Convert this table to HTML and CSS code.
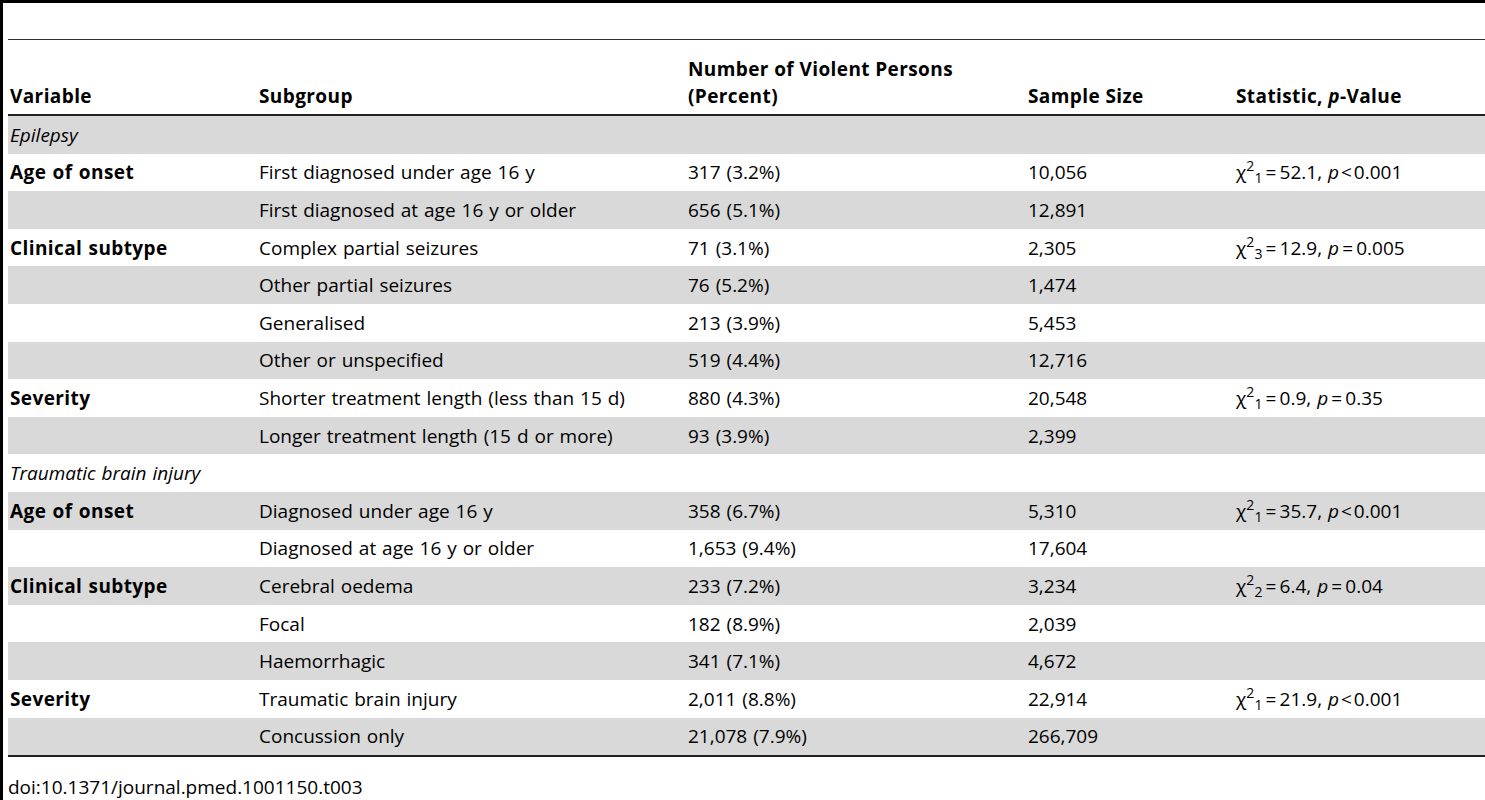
FILE: index.html
```html
<!DOCTYPE html>
<html lang="en">
<head>
  <meta charset="UTF-8" />
  <title>Table 3</title>
  <link rel="stylesheet" href="styles.css">
</head>
<body>

<div class="top-rule"></div>
<div class="frame">
  <div class="side-rule"></div>
  <div class="content">
    <table class="data">
      <colgroup>
        <col class="c-var">
        <col class="c-sub">
        <col class="c-num">
        <col class="c-size">
        <col class="c-stat">
      </colgroup>
      <thead>
        <tr>
          <th>Variable</th>
          <th>Subgroup</th>
          <th>Number of Violent Persons<br>(Percent)</th>
          <th>Sample Size</th>
          <th>Statistic, <i>p</i>-Value</th>
        </tr>
      </thead>
      <tbody>
        <tr class="shade"><td class="group" colspan="5">Epilepsy</td></tr>
        <tr>
          <td class="var">Age of onset</td><td>First diagnosed under age 16 y</td><td>317 (3.2%)</td><td>10,056</td>
          <td>χ<sup>2</sup><sub>1</sub>&#8201;=&#8201;52.1, <i>p</i><span class="lt">&lt;</span>0.001</td>
        </tr>
        <tr class="shade"><td></td><td>First diagnosed at age 16 y or older</td><td>656 (5.1%)</td><td>12,891</td><td></td></tr>
        <tr>
          <td class="var">Clinical subtype</td><td>Complex partial seizures</td><td>71 (3.1%)</td><td>2,305</td>
          <td>χ<sup>2</sup><sub>3</sub>&#8201;=&#8201;12.9, <i>p</i>&#8201;=&#8201;0.005</td>
        </tr>
        <tr class="shade"><td></td><td>Other partial seizures</td><td>76 (5.2%)</td><td>1,474</td><td></td></tr>
        <tr><td></td><td>Generalised</td><td>213 (3.9%)</td><td>5,453</td><td></td></tr>
        <tr class="shade"><td></td><td>Other or unspecified</td><td>519 (4.4%)</td><td>12,716</td><td></td></tr>
        <tr>
          <td class="var">Severity</td><td>Shorter treatment length (less than 15 d)</td><td>880 (4.3%)</td><td>20,548</td>
          <td>χ<sup>2</sup><sub>1</sub>&#8201;=&#8201;0.9, <i>p</i>&#8201;=&#8201;0.35</td>
        </tr>
        <tr class="shade"><td></td><td>Longer treatment length (15 d or more)</td><td>93 (3.9%)</td><td>2,399</td><td></td></tr>
        <tr><td class="group" colspan="5">Traumatic brain injury</td></tr>
        <tr class="shade">
          <td class="var">Age of onset</td><td>Diagnosed under age 16 y</td><td>358 (6.7%)</td><td>5,310</td>
          <td>χ<sup>2</sup><sub>1</sub>&#8201;=&#8201;35.7, <i>p</i><span class="lt">&lt;</span>0.001</td>
        </tr>
        <tr><td></td><td>Diagnosed at age 16 y or older</td><td>1,653 (9.4%)</td><td>17,604</td><td></td></tr>
        <tr class="shade">
          <td class="var">Clinical subtype</td><td>Cerebral oedema</td><td>233 (7.2%)</td><td>3,234</td>
          <td>χ<sup>2</sup><sub>2</sub>&#8201;=&#8201;6.4, <i>p</i>&#8201;=&#8201;0.04</td>
        </tr>
        <tr><td></td><td>Focal</td><td>182 (8.9%)</td><td>2,039</td><td></td></tr>
        <tr class="shade"><td></td><td>Haemorrhagic</td><td>341 (7.1%)</td><td>4,672</td><td></td></tr>
        <tr>
          <td class="var">Severity</td><td>Traumatic brain injury</td><td>2,011 (8.8%)</td><td>22,914</td>
          <td>χ<sup>2</sup><sub>1</sub>&#8201;=&#8201;21.9, <i>p</i><span class="lt">&lt;</span>0.001</td>
        </tr>
        <tr class="shade"><td></td><td>Concussion only</td><td>21,078 (7.9%)</td><td>266,709</td><td></td></tr>
      </tbody>
    </table>

    <div class="doi">doi:10.1371/journal.pmed.1001150.t003</div>
  </div>
</div>

</body>
</html>
```

FILE: styles.css
```css
html, body {
  margin: 0;
  background: #fff;
  color: #000;
  font-family: "Open Sans", "DejaVu Sans", sans-serif;
  font-size: 19px;
}
.top-rule {
  height: 3px;
  background: #000;
}
.frame {
  display: flex;
  height: 797px;
  overflow: hidden;
}
.side-rule {
  width: 3px;
  flex: none;
  background: #000;
}
.content {
  flex: 1;
  min-width: 0;
  padding: 36px 0 0 5px;
}
.data {
  width: 100%;
  table-layout: fixed;
  border-collapse: collapse;
  border-top: 1px solid #333;
  border-bottom: 2px solid #222;
}
.c-var { width: 249px; }
.c-sub { width: 429px; }
.c-num { width: 340px; }
.c-size { width: 208px; }
.c-stat { width: auto; }

.data th {
  height: 70px;
  padding: 0 2px 4px;
  text-align: left;
  vertical-align: bottom;
  font-weight: bold;
  line-height: 27px;
  letter-spacing: 0.4px;
  border-bottom: 2px solid #222;
}
.data td {
  height: 37.6px;
  padding: 0 2px;
  vertical-align: middle;
  line-height: 24px;
  white-space: nowrap;
  word-spacing: 1px;
}
.data tr.shade td { background: #d9d9d9; }
.data td.var { font-weight: bold; letter-spacing: 0.4px; }
.data td.group { font-style: italic; }

.data sup, .data sub {
  font-size: 14px;
  line-height: 0;
  position: relative;
  vertical-align: baseline;
}
.data sup { top: -8px; }
.data sub { top: 4px; }
.lt { margin: 0 2px; }

.doi {
  padding-top: 20px;
  line-height: 20px;
}
```
